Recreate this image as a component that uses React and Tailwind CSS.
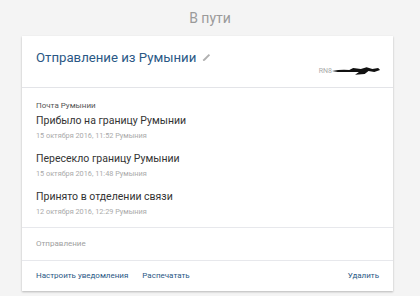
export default function App() {
    const events = [
        { title: "Прибыло на границу Румынии", date: "15 октября 2016, 11:52 Румыния" },
        { title: "Пересекло границу Румынии", date: "15 октября 2016, 11:48 Румыния" },
        { title: "Принято в отделении связи", date: "12 октября 2016, 12:29 Румыния" },
    ];

    return (
        <div className="w-[420px] h-[296px] bg-[#f4f4f4] font-['Roboto',sans-serif] overflow-hidden">
            <div className="h-[36px] flex items-center justify-center text-[14px] text-[#9a9a9a]">
                В пути
            </div>
            <div className="mx-[22px] w-[371px] bg-white shadow-[0_1px_2px_rgba(0,0,0,0.25)]">
                <div className="h-[52px] px-[14px] pt-[12px] relative border-b border-[#e3e4e8]">
                    <div className="flex items-center gap-[6px]">
                        <span className="text-[13.2px] text-[#2a5885]">Отправление из Румынии</span>
                        <svg width="9" height="9" viewBox="0 0 10 10">
                            <path d="M1 9 L1.5 7 L7.5 1 L9 2.5 L3 8.5 Z" fill="#b0b0b0" />
                        </svg>
                    </div>
                    <div className="absolute right-[11px] bottom-[10px] flex items-center">
                        <span className="text-[7px] text-[#aaaaaa]">RN8</span>
                        <svg width="50" height="12" viewBox="0 0 52 12">
                            <path d="M0 6 Q10 4 18 5 L22 3 L30 4 L36 2 L42 4 L48 3 L50 5 L44 7 L38 6 L34 9 L24 10 L28 7 L18 7 L6 7 Z" fill="#111" />
                        </svg>
                    </div>
                </div>
                <div className="px-[14px] pt-[12px] pb-[9px] border-b border-[#e7e8ec]">
                    <div className="text-[8px] text-[#555] leading-[12px]">Почта Румынии</div>
                    <div className="flex flex-col gap-[8px]">
                        {events.map((e) => (
                            <div key={e.title}>
                                <div className="text-[10.5px] text-[#333] leading-[17px]">{e.title}</div>
                                <div className="text-[7.3px] text-[#aaa] leading-[12px] mt-[1px]">{e.date}</div>
                            </div>
                        ))}
                    </div>
                </div>
                <div className="h-[33px] px-[14px] flex items-center text-[8px] text-[#a0a0a0] border-b border-[#e7e8ec]">
                    Отправление
                </div>
                <div className="h-[30px] px-[14px] flex items-center text-[8px] text-[#2a5885]">
                    <span>Настроить уведомления</span>
                    <span className="ml-[14px]">Распечатать</span>
                    <span className="ml-auto">Удалить</span>
                </div>
            </div>
        </div>
    );
}
